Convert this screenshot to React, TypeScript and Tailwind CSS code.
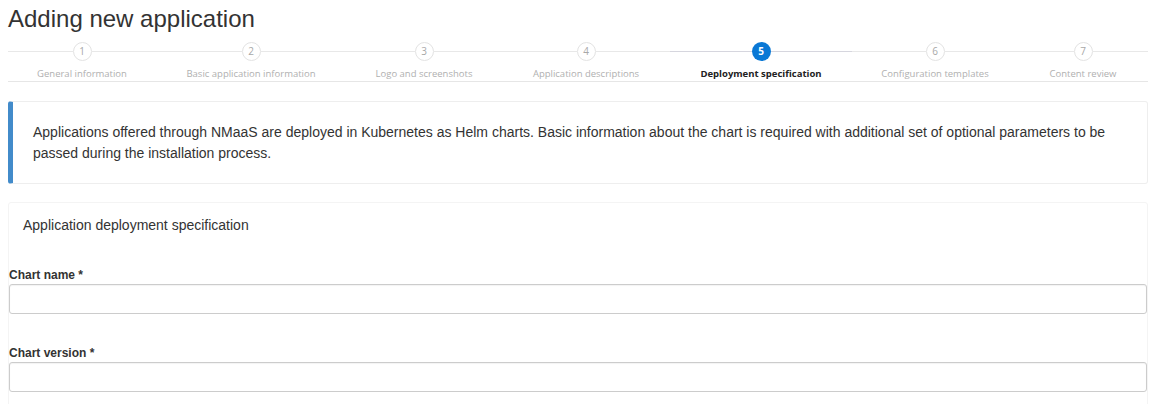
import React from "react";

const steps = [
  { n: 1, name: "General information", w: "w-[148px]" },
  { n: 2, name: "Basic application information", w: "w-[190px]" },
  { n: 3, name: "Logo and screenshots", w: "w-[156px]" },
  { n: 4, name: "Application descriptions", w: "w-[168px]" },
  { n: 5, name: "Deployment specification", w: "w-[182px]" },
  { n: 6, name: "Configuration templates", w: "w-[166px]" },
  { n: 7, name: "Content review", w: "w-[130px]" },
];

const active = 5;

const Field = ({ label }: { label: string }) => (
  <div className="mb-[31px]">
    <label className="block text-[12px] leading-[17px] font-bold text-[#333] mb-0">
      {label} *
    </label>
    <input
      type="text"
      className="block w-full h-[30px] border border-[#ccc] rounded-[3px] bg-white px-[10px] text-[14px] shadow-[inset_0_1px_1px_rgba(0,0,0,0.05)] outline-none"
    />
  </div>
);

export default function App() {
  return (
    <div className="min-h-screen bg-white pl-[8px] pr-[10px] text-[#333] font-['Liberation_Sans',Arial,sans-serif]">
      <h1 className="text-[24px] leading-[26px] pt-[6px] pb-[10px] font-normal">
        Adding new application
      </h1>

      {/* stepper */}
      <div className="flex border-b border-[#e6e6e6] font-['Open_Sans',sans-serif]">
        {steps.map((s) => {
          const on = s.n === active;
          return (
            <div key={s.n} className={`${s.w} shrink-0`}>
              <div className="flex items-center">
                <div className={on ? "h-px flex-1 bg-[#d6d6de]" : "h-px flex-1 bg-[#e8e8e8]"} />
                {on ? (
                  <div className="w-[19px] h-[19px] rounded-full bg-[#0a78d5] text-white text-[10px] font-bold flex items-center justify-center">
                    {s.n}
                  </div>
                ) : (
                  <div className="w-[19px] h-[19px] rounded-full border border-[#e3e3e3] bg-white text-[#a8a8a8] text-[10px] flex items-center justify-center">
                    {s.n}
                  </div>
                )}
                <div className={on ? "h-px flex-1 bg-[#d6d6de]" : "h-px flex-1 bg-[#e8e8e8]"} />
              </div>
              <div
                className={
                  on
                    ? "mt-[6px] text-center text-[9.5px] leading-[14px] font-bold text-[#222] whitespace-nowrap"
                    : "mt-[6px] text-center text-[9.5px] leading-[14px] text-[#b0b0b0] whitespace-nowrap"
                }
              >
                {s.name}
              </div>
            </div>
          );
        })}
      </div>

      {/* info callout */}
      <div className="mt-[19px] border border-[#eee] border-l-[5px] border-l-[#428bca] rounded-[3px] pl-[20px] pr-[20px] pt-[20px] pb-[19px] text-[14px] leading-[21px]">
        Applications offered through NMaaS are deployed in Kubernetes as Helm charts. Basic information about the chart is
        required with additional set of optional parameters to be passed during the installation process.
      </div>

      {/* deployment panel */}
      <div className="mt-[18px] border border-[#f4f4f4] rounded-[3px]">
        <div className="px-[14px] pt-[12px] pb-[10px] text-[14px] leading-[20px]">
          Application deployment specification
        </div>
        <div className="mt-[22px]">
          <Field label="Chart name" />
          <Field label="Chart version" />
        </div>
      </div>
    </div>
  );
}
